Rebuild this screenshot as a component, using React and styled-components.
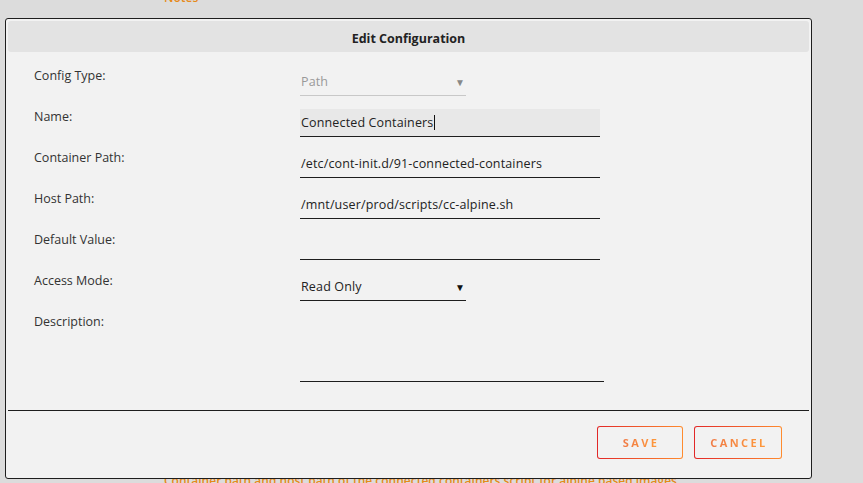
import React from 'react';
import styled, { createGlobalStyle } from 'styled-components';

const GlobalStyle = createGlobalStyle`
  html, body {
    margin: 0;
    padding: 0;
    background: #dcdcdc;
    font-family: 'Open Sans', 'Liberation Sans', sans-serif;
    overflow: hidden;
  }
`;

const Page = styled.div`
  position: relative;
  width: 863px;
  height: 483px;
  overflow: hidden;
`;

const Backdrop = styled.div`
  padding-left: 164px;
  color: #e68a1a;
  font-size: 12px;
  font-weight: 600;
`;

const BackdropLine = styled.div`
  height: 14px;
  line-height: 14px;
  margin-top: ${p => p.$offset}px;
  white-space: nowrap;
`;

const Dialog = styled.div`
  position: absolute;
  left: 5px;
  top: 18px;
  width: 807px;
  height: 461px;
  border: 1px solid #1e1e1e;
  border-radius: 3px;
  background: #f2f2f2;
  padding: 2px;
  box-sizing: border-box;
  display: flex;
  flex-direction: column;
`;

const TitleBar = styled.div`
  height: 31px;
  padding-top: 3px;
  box-sizing: border-box;
  border-radius: 3px;
  background: #e3e3e3;
  display: flex;
  align-items: center;
  justify-content: center;
  font-size: 12.5px;
  font-weight: 700;
  color: #222;
`;

const Form = styled.div`
  padding: 16px 0 0 26px;
  display: flex;
  flex-direction: column;
  gap: 13px;
`;

const Row = styled.div`
  display: grid;
  grid-template-columns: 266px auto;
  align-items: start;
`;

const Label = styled.div`
  font-size: 12.5px;
  line-height: 16px;
  color: #333;
`;

const Field = styled.div`
  box-sizing: border-box;
  width: ${p => p.$width}px;
  height: ${p => p.$height || 28}px;
  border-bottom: 1px solid #1e1e1e;
  background: ${p => (p.$focused ? '#e8e8e8' : 'transparent')};
  display: flex;
  align-items: ${p => (p.$tall ? 'flex-start' : 'center')};
  padding-left: 1px;
  font-size: 12.5px;
  letter-spacing: 0.15px;
  color: #222;
  white-space: nowrap;
`;

const SelectField = styled(Field)`
  justify-content: space-between;
  padding-right: 1px;
  color: ${p => (p.$disabled ? '#999' : '#222')};
  border-bottom-color: ${p => (p.$disabled ? '#c8c8c8' : '#1e1e1e')};
`;

const Arrow = styled.span`
  font-size: 10px;
  color: ${p => (p.$disabled ? '#888' : '#111')};
`;

const Caret = styled.span`
  display: inline-block;
  width: 1px;
  height: 15px;
  background: #111;
  margin-left: 1px;
`;

const Separator = styled.div`
  margin-top: auto;
  height: 1px;
  background: #1e1e1e;
`;

const Footer = styled.div`
  display: flex;
  justify-content: flex-end;
  gap: 11px;
  padding: 15px 27px 17px 0;
`;

const Button = styled.button`
  width: ${p => p.$width}px;
  height: 33px;
  border: 1.5px solid transparent;
  border-radius: 3px;
  background:
    linear-gradient(#f2f2f2, #f2f2f2) padding-box,
    linear-gradient(90deg, #e22828, #ff8c2f) border-box;
  font-family: 'Open Sans', 'Liberation Sans', sans-serif;
  font-size: 11px;
  font-weight: 700;
  letter-spacing: 2.4px;
  padding: 0 0 0 2px;
  cursor: pointer;
`;

const ButtonText = styled.span`
  background: linear-gradient(90deg, #f07a45, #ff9a3a);
  -webkit-background-clip: text;
  background-clip: text;
  color: transparent;
`;

const rows = [
  { label: 'Config Type:', type: 'select', value: 'Path', width: 166, disabled: true },
  { label: 'Name:', value: 'Connected Containers', width: 300, focused: true },
  { label: 'Container Path:', value: '/etc/cont-init.d/91-connected-containers', width: 300 },
  { label: 'Host Path:', value: '/mnt/user/prod/scripts/cc-alpine.sh', width: 300 },
  { label: 'Default Value:', value: '', width: 300 },
  { label: 'Access Mode:', type: 'select', value: 'Read Only', width: 166 },
  { label: 'Description:', value: '', width: 304, height: 68, tall: true },
];

export default function App() {
  return (
    <Page>
      <GlobalStyle />
      <Backdrop>
        <BackdropLine $offset={-9}>Notes</BackdropLine>
        <BackdropLine $offset={469}>
          Container path and host path of the connected containers script for alpine based images
        </BackdropLine>
      </Backdrop>
      <Dialog>
        <TitleBar>Edit Configuration</TitleBar>
        <Form>
          {rows.map(r => (
            <Row key={r.label}>
              <Label>{r.label}</Label>
              {r.type === 'select' ? (
                <SelectField $width={r.width} $disabled={r.disabled}>
                  <span>{r.value}</span>
                  <Arrow $disabled={r.disabled}>▼</Arrow>
                </SelectField>
              ) : (
                <Field
                  $width={r.width}
                  $height={r.height}
                  $focused={r.focused}
                  $tall={r.tall}
                >
                  {r.value}
                  {r.focused && <Caret />}
                </Field>
              )}
            </Row>
          ))}
        </Form>
        <Separator />
        <Footer>
          <Button $width={86}>
            <ButtonText>SAVE</ButtonText>
          </Button>
          <Button $width={88}>
            <ButtonText>CANCEL</ButtonText>
          </Button>
        </Footer>
      </Dialog>
    </Page>
  );
}
